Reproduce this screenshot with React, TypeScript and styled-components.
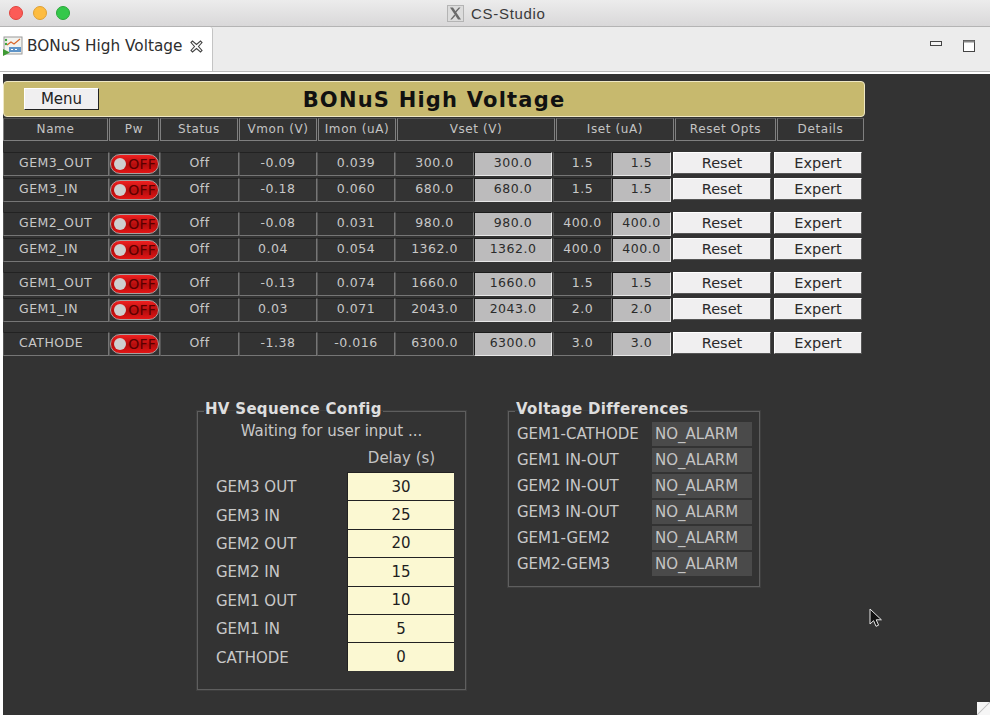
import styled, { createGlobalStyle } from 'styled-components';

interface Channel {
  name: string;
  vmon: string;
  imon: string;
  vset: string;
  iset: string;
  left?: boolean;
}

const channelGroups: Channel[][] = [
  [
    { name: 'GEM3_OUT', vmon: '-0.09', imon: '0.039', vset: '300.0', iset: '1.5' },
    { name: 'GEM3_IN', vmon: '-0.18', imon: '0.060', vset: '680.0', iset: '1.5' },
  ],
  [
    { name: 'GEM2_OUT', vmon: '-0.08', imon: '0.031', vset: '980.0', iset: '400.0' },
    { name: 'GEM2_IN', vmon: '0.04', imon: '0.054', vset: '1362.0', iset: '400.0', left: true },
  ],
  [
    { name: 'GEM1_OUT', vmon: '-0.13', imon: '0.074', vset: '1660.0', iset: '1.5' },
    { name: 'GEM1_IN', vmon: '0.03', imon: '0.071', vset: '2043.0', iset: '2.0', left: true },
  ],
  [{ name: 'CATHODE', vmon: '-1.38', imon: '-0.016', vset: '6300.0', iset: '3.0' }],
];

const headers = [
  ['Name', 105],
  ['Pw', 50],
  ['Status', 78],
  ['Vmon (V)', 78],
  ['Imon (uA)', 78],
  ['Vset (V)', 158],
  ['Iset (uA)', 118],
  ['Reset Opts', 101],
  ['Details', 87],
] as const;

const delays = [
  ['GEM3 OUT', '30'],
  ['GEM3 IN', '25'],
  ['GEM2 OUT', '20'],
  ['GEM2 IN', '15'],
  ['GEM1 OUT', '10'],
  ['GEM1 IN', '5'],
  ['CATHODE', '0'],
];

const differences = [
  'GEM1-CATHODE',
  'GEM1 IN-OUT',
  'GEM2 IN-OUT',
  'GEM3 IN-OUT',
  'GEM1-GEM2',
  'GEM2-GEM3',
];

const GlobalStyle = createGlobalStyle`
  html, body {
    margin: 0;
    padding: 0;
    background: #fff;
  }
  * {
    box-sizing: border-box;
  }
`;

const Window = styled.div`
  width: 990px;
  height: 716px;
  display: flex;
  flex-direction: column;
  overflow: hidden;
  position: relative;
  background: #fff;
  font-family: 'DejaVu Sans', sans-serif;
`;

const TitleBar = styled.header`
  height: 27px;
  flex: none;
  display: flex;
  align-items: center;
  position: relative;
  background: linear-gradient(#ececec, #d9d8d9);
  border-bottom: 1px solid #b4b4b4;
`;

const Lights = styled.div`
  display: flex;
  gap: 9.5px;
  padding-left: 9px;
`;

const Light = styled.span<{ $color: string; $edge: string }>`
  width: 14px;
  height: 14px;
  border-radius: 50%;
  background: ${({ $color }) => $color};
  border: 1px solid ${({ $edge }) => $edge};
`;

const WindowTitle = styled.div`
  position: absolute;
  left: 447px;
  top: 5px;
  display: flex;
  align-items: center;
  gap: 7px;
  font-size: 15px;
  color: #3a3a3a;
  font-family: 'Liberation Sans', sans-serif;
  letter-spacing: 0.7px;
`;

const TabStrip = styled.div`
  height: 45px;
  flex: none;
  display: flex;
  justify-content: space-between;
  background: #ececec;
  border-bottom: 1px solid #b9b9b9;
`;

const Tab = styled.div`
  width: 213px;
  height: 44px;
  display: flex;
  align-items: center;
  padding: 0 0 6px 3px;
  background: #fff;
  border-right: 1px solid #c4c4c4;
  border-radius: 0 3px 0 0;
`;

const TabLabel = styled.span`
  margin-left: 4px;
  font-size: 15.3px;
  color: #2e2e2e;
  white-space: nowrap;
`;

const TabClose = styled.svg`
  margin-left: 8px;
`;

const ViewActions = styled.div`
  display: flex;
  gap: 21px;
  padding: 13px 15px 0 0;
`;

const Canvas = styled.main`
  flex: 1;
  margin: 2px 0 1px 3px;
  padding-top: 7px;
  background: #333333;
  position: relative;
`;

const Banner = styled.div`
  width: 862px;
  height: 36px;
  display: grid;
  grid-template-columns: 1fr auto 1fr;
  align-items: center;
  background: #c7b96e;
  border: 1px solid #efe8c4;
  border-radius: 4px;
`;

const MenuButton = styled.button`
  width: 75px;
  height: 22px;
  padding: 0;
  margin-left: 20px;
  justify-self: start;
  font: 15px 'DejaVu Sans', sans-serif;
  color: #222;
  background: #f0eff0;
  border: 1px solid #fff;
  border-right-color: #222;
  border-bottom-color: #222;
`;

const BannerTitle = styled.h1`
  margin: 2px 0 0;
  font-size: 21px;
  line-height: 1;
  font-weight: 700;
  letter-spacing: 1.2px;
  color: #111;
`;

const HeaderRow = styled.div`
  display: flex;
  gap: 1px;
  height: 23px;
  margin-top: 1px;
`;

const HeaderCell = styled.div`
  display: flex;
  align-items: center;
  justify-content: center;
  padding-bottom: 2px;
  font-size: 12px;
  letter-spacing: 0.6px;
  color: #c4c4c4;
  border: 1px solid #808080;
  border-top-color: #555;
`;

const Groups = styled.div`
  display: flex;
  flex-direction: column;
  gap: 10px;
  margin-top: 11px;
`;

const Group = styled.div`
  display: flex;
  flex-direction: column;
  gap: 2px;
`;

const Row = styled.div`
  display: grid;
  grid-template-columns: 106px 51px 79px 78px 78px 79px 79px 59px 60px 100px 90px;
  height: 24px;
`;

const Cell = styled.div<{ $left?: boolean }>`
  display: flex;
  align-items: center;
  justify-content: ${({ $left }) => ($left ? 'flex-start' : 'center')};
  padding-left: ${({ $left }) => ($left ? '18px' : '0')};
  font-size: 12.5px;
  letter-spacing: 0.5px;
  padding-bottom: 3px;
  color: #c8c8c8;
  border: 1px solid #767676;
  border-top-color: #222;
  border-left-color: #555;
`;

const NameCell = styled(Cell)`
  justify-content: flex-start;
  padding-left: 15px;
`;

const SwitchCell = styled(Cell)`
  padding: 0;
`;

const PowerSwitch = styled.div`
  width: 49px;
  height: 20px;
  display: flex;
  align-items: center;
  justify-content: space-between;
  padding: 0 2px 0 3px;
  border-radius: 10px;
  background: linear-gradient(#f02020, #b40d0d 55%, #e31616);
  border: 1px solid #a8a0a0;
`;

const Knob = styled.span`
  width: 12px;
  height: 12px;
  border-radius: 50%;
  background: #cfcfcf;
`;

const SwitchText = styled.span`
  font-size: 14px;
  letter-spacing: 0.2px;
  color: #5a0000;
`;

const SetPoint = styled.div`
  display: flex;
  align-items: center;
  justify-content: center;
  margin-right: 1px;
  padding-bottom: 3px;
  font-size: 12.5px;
  letter-spacing: 0.5px;
  color: #2b2b2b;
  background: #bcbbbc;
  border: 1px solid #e8e8e8;
  border-top-color: #1c1c1c;
  border-left-color: #1c1c1c;
`;

const ActionButton = styled.button<{ $side: 'reset' | 'expert' }>`
  height: 22px;
  padding: 0;
  margin-left: ${({ $side }) => ($side === 'reset' ? '1px' : '2px')};
  margin-right: ${({ $side }) => ($side === 'reset' ? '1px' : '0')};
  font: 14.5px 'DejaVu Sans', sans-serif;
  color: #2a2a2a;
  background: #f0eff0;
  border: 1px solid #fff;
  border-right-color: #555;
  border-bottom-color: #555;
`;

const Panels = styled.div`
  display: flex;
  align-items: flex-start;
  gap: 42px;
  margin-top: 45px;
  padding-left: 194px;
`;

const Panel = styled.fieldset<{ $width: number; $height: number }>`
  width: ${({ $width }) => $width}px;
  height: ${({ $height }) => $height}px;
  margin: 0;
  padding: 0;
  min-width: 0;
  border: 1px solid #5e5e5e;
  box-shadow: 0 0 0 1px #3e3e3e;
`;

const PanelTitle = styled.legend`
  margin-left: 6px;
  padding: 0 1px 4px;
  font-size: 15px;
  line-height: 17px;
  font-weight: 700;
  letter-spacing: 0.3px;
  color: #dedede;
`;

const Waiting = styled.div`
  text-align: center;
  font-size: 15px;
  line-height: 18px;
  color: #c8c8c8;
`;

const DelayHeading = styled.div`
  margin-top: 9px;
  padding-left: 150px;
  font-size: 15px;
  line-height: 18px;
  text-align: center;
  width: 257px;
  color: #c4c4c4;
`;

const DelayList = styled.div`
  margin-top: 5px;
  display: flex;
  flex-direction: column;
`;

const DelayRow = styled.div`
  display: grid;
  grid-template-columns: 131px 107px;
  height: 28.4px;
  padding-left: 18px;
  align-items: center;
  font-size: 15px;
  color: #c8c8c8;
`;

const DelayLabel = styled.span`
  margin-top: 2px;
`;

const DelayInput = styled.div`
  height: 100%;
  display: flex;
  align-items: center;
  justify-content: center;
  font-size: 15px;
  color: #1e1e1e;
  background: #fbf8d2;
  border-top: 1px solid #222;
  border-left: 1px solid #222;
`;

const DiffList = styled.div`
  display: flex;
  flex-direction: column;
  gap: 2px;
  padding-left: 8px;
`;

const DiffRow = styled.div`
  display: grid;
  grid-template-columns: 135px 100px;
  height: 24px;
  align-items: center;
  font-size: 15px;
  color: #c8c8c8;
`;

const AlarmValue = styled.div`
  height: 24px;
  line-height: 24px;
  padding-left: 3px;
  font-size: 15px;
  color: #c4c4c4;
  background: #4a4a4a;
`;

const Pointer = styled.svg`
  position: absolute;
  left: 866px;
  top: 534px;
`;

const ResizeGrip = styled.div`
  position: absolute;
  right: 0;
  bottom: 0;
  width: 13px;
  height: 13px;
  background: linear-gradient(135deg, #f6f6f6 45%, #c4c4c4 50%, #f6f6f6 55%);
`;

const TabIcon = () => (
  <svg width="20" height="20" viewBox="0 0 20 20">
    <rect x="1" y="1" width="18" height="17" fill="#f2f2ee" stroke="#9a9a9a" />
    <path d="M4 9l4-3 3 2 6-5" fill="none" stroke="#d9662a" strokeWidth="1.2" />
    <circle cx="3" cy="4" r="1.2" fill="#3ca33c" />
    <circle cx="3" cy="8" r="1.2" fill="#3ca33c" />
    <rect x="6" y="11" width="12" height="5" fill="#5f94c8" />
    <rect x="8" y="13" width="2" height="1" fill="#fff" />
    <rect x="12" y="13" width="2" height="1" fill="#fff" />
    <path d="M0 13l7 3.5L0 20z" fill="#3f9a35" />
  </svg>
);

const CloseIcon = () => (
  <TabClose width="13" height="13" viewBox="0 0 13 13">
    <path
      d="M1 2.5 2.5 1 6.5 4.5 10.5 1 12 2.5 8.5 6.5 12 10.5 10.5 12 6.5 8.5 2.5 12 1 10.5 4.5 6.5z"
      fill="#fff"
      stroke="#444"
      strokeWidth="1.1"
    />
  </TabClose>
);

const XIcon = () => (
  <svg width="17" height="17" viewBox="0 0 17 17">
    <rect x="0.5" y="0.5" width="16" height="16" fill="#dcdcdc" stroke="#b4b4b4" />
    <path d="M3 2.5h3l8 12h-3z" fill="#6a6a6a" />
    <path d="M13.5 2.5 8.7 8 7.8 6.8 11.8 2.5zM3.3 14.5 7.4 9.6l.9 1.2-3.4 3.7z" fill="#6a6a6a" />
  </svg>
);

const App = () => (
  <>
    <GlobalStyle />
    <Window>
      <TitleBar>
        <Lights>
          <Light $color="#fc5b57" $edge="#e0443e" />
          <Light $color="#fdbc40" $edge="#dea034" />
          <Light $color="#34c84a" $edge="#2aa63a" />
        </Lights>
        <WindowTitle>
          <XIcon />
          CS-Studio
        </WindowTitle>
      </TitleBar>

      <TabStrip>
        <Tab>
          <TabIcon />
          <TabLabel>BONuS High Voltage</TabLabel>
          <CloseIcon />
        </Tab>
        <ViewActions>
          <svg width="12" height="12" viewBox="0 0 12 12">
            <rect x="0.5" y="1.5" width="11" height="4" fill="#f4f4f4" stroke="#444" />
          </svg>
          <svg width="12" height="13" viewBox="0 0 12 13">
            <rect x="0.5" y="0.5" width="11" height="11" fill="#fff" stroke="#444" />
            <rect x="0.5" y="0.5" width="11" height="2" fill="#888" />
          </svg>
        </ViewActions>
      </TabStrip>

      <Canvas>
        <Banner>
          <MenuButton>Menu</MenuButton>
          <BannerTitle>BONuS High Voltage</BannerTitle>
        </Banner>

        <HeaderRow>
          {headers.map(([label, width]) => (
            <HeaderCell key={label} style={{ width }}>
              {label}
            </HeaderCell>
          ))}
        </HeaderRow>

        <Groups>
          {channelGroups.map((group, index) => (
            <Group key={index}>
              {group.map((channel) => (
                <Row key={channel.name}>
                  <NameCell>{channel.name}</NameCell>
                  <SwitchCell>
                    <PowerSwitch>
                      <Knob />
                      <SwitchText>OFF</SwitchText>
                    </PowerSwitch>
                  </SwitchCell>
                  <Cell>Off</Cell>
                  <Cell $left={channel.left}>{channel.vmon}</Cell>
                  <Cell>{channel.imon}</Cell>
                  <Cell>{channel.vset}</Cell>
                  <SetPoint>{channel.vset}</SetPoint>
                  <Cell>{channel.iset}</Cell>
                  <SetPoint>{channel.iset}</SetPoint>
                  <ActionButton $side="reset">Reset</ActionButton>
                  <ActionButton $side="expert">Expert</ActionButton>
                </Row>
              ))}
            </Group>
          ))}
        </Groups>

        <Panels>
          <Panel $width={269} $height={289}>
            <PanelTitle>HV Sequence Config</PanelTitle>
            <Waiting>Waiting for user input ...</Waiting>
            <DelayHeading>Delay (s)</DelayHeading>
            <DelayList>
              {delays.map(([label, value]) => (
                <DelayRow key={label}>
                  <DelayLabel>{label}</DelayLabel>
                  <DelayInput>{value}</DelayInput>
                </DelayRow>
              ))}
            </DelayList>
          </Panel>

          <Panel $width={252} $height={186}>
            <PanelTitle>Voltage Differences</PanelTitle>
            <DiffList>
              {differences.map((label) => (
                <DiffRow key={label}>
                  <span>{label}</span>
                  <AlarmValue>NO_ALARM</AlarmValue>
                </DiffRow>
              ))}
            </DiffList>
          </Panel>
        </Panels>

        <Pointer width="14" height="21" viewBox="0 0 14 21">
          <path
            d="M1 1v15l3.6-3.3 2.4 5.6 2.6-1.1-2.4-5.4H12.4z"
            fill="#111"
            stroke="#e8e8e8"
            strokeWidth="1"
          />
        </Pointer>
        <ResizeGrip />
      </Canvas>
    </Window>
  </>
);

export default App;
